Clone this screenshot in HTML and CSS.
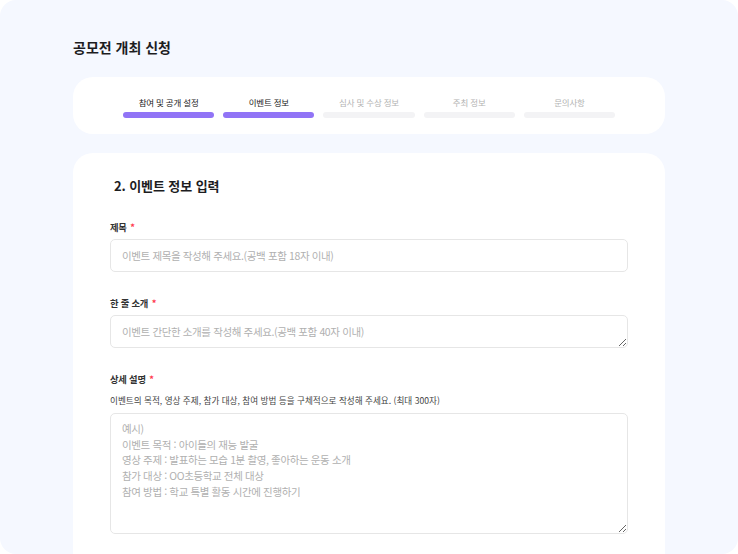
FILE: index.html
```html
<!DOCTYPE html>
<html lang="ko">
<head>
<meta charset="utf-8">
<link rel="stylesheet" href="styles.css">
</head>
<body>
<div class="page">
  <h1 class="title">공모전 개최 신청</h1>
  <div class="card stepper">
    <div class="step active"><span class="step-label">참여 및 공개 설정</span><span class="bar"></span></div>
    <div class="step active"><span class="step-label">이벤트 정보</span><span class="bar"></span></div>
    <div class="step"><span class="step-label">심사 및 수상 정보</span><span class="bar"></span></div>
    <div class="step"><span class="step-label">주최 정보</span><span class="bar"></span></div>
    <div class="step"><span class="step-label">문의사항</span><span class="bar"></span></div>
  </div>
  <div class="card form">
    <h2 class="form-title">2. 이벤트 정보 입력</h2>
    <div class="field">
      <label class="label">제목 <span class="req">*</span></label>
      <input class="input" type="text" placeholder="이벤트 제목을 작성해 주세요.(공백 포함 18자 이내)">
    </div>
    <div class="field">
      <label class="label">한 줄 소개 <span class="req">*</span></label>
      <textarea class="input short" placeholder="이벤트 간단한 소개를 작성해 주세요.(공백 포함 40자 이내)"></textarea>
    </div>
    <div class="field">
      <label class="label">상세 설명 <span class="req">*</span></label>
      <p class="help">이벤트의 목적, 영상 주제, 참가 대상, 참여 방법 등을 구체적으로 작성해 주세요. (최대 300자)</p>
      <textarea class="input long" placeholder="예시)&#10;이벤트 목적 : 아이들의 재능 발굴&#10;영상 주제 : 발표하는 모습 1분 촬영, 좋아하는 운동 소개&#10;참가 대상 : OO초등학교 전체 대상&#10;참여 방법 : 학교 특별 활동 시간에 진행하기"></textarea>
    </div>
  </div>
</div>
</body>
</html>
```

FILE: styles.css
```css
* { box-sizing: border-box; }
html, body { margin: 0; padding: 0; background: #ffffff; }
body {
  font-family: "Noto Sans CJK KR", "Noto Sans", sans-serif;
  color: #222;
}
.page {
  width: 738px;
  height: 554px;
  background: #f5f8ff;
  border-radius: 16px;
  padding: 36px 73px 0;
  overflow: hidden;
}
.title {
  margin: 0;
  font-size: 14px;
  line-height: 22px;
  font-weight: 700;
  letter-spacing: 0;
  color: #1d1d1f;
}
.card {
  background: #ffffff;
  border-radius: 20px;
}
.stepper {
  margin-top: 19px;
  height: 57px;
  padding: 18px 50px 0;
  display: grid;
  grid-template-columns: repeat(5, 1fr);
  column-gap: 9px;
}
.step {
  display: flex;
  flex-direction: column;
  align-items: center;
  gap: 3px;
}
.step-label {
  font-size: 8.5px;
  line-height: 14px;
  color: #b3b3b3;
  letter-spacing: -0.2px;
}
.step.active .step-label { color: #222; }
.bar {
  width: 100%;
  height: 6px;
  border-radius: 3px;
  background: #f3f3f5;
}
.step.active .bar { background: #9174f6; }
.form {
  margin-top: 19px;
  height: 420px;
  padding: 24px 37px 0;
  border-radius: 20px 20px 0 0;
}
.form-title {
  margin: 0 0 25px;
  padding-left: 4px;
  font-size: 13px;
  line-height: 18px;
  font-weight: 600;
  color: #1d1d1f;
  letter-spacing: -0.1px;
}
.field {
  display: flex;
  flex-direction: column;
  margin-bottom: 24px;
}
.label {
  font-size: 9.3px;
  line-height: 14px;
  font-weight: 600;
  color: #333;
  margin-bottom: 5px;
  letter-spacing: -0.2px;
}
.req { color: #ff3b4e; margin-left: 1px; }
.help {
  margin: 3px 0 7px;
  font-size: 8.6px;
  line-height: 12px;
  color: #444;
  letter-spacing: 0;
}
.input {
  width: 100%;
  height: 33px;
  border: 1px solid #e6e6e6;
  border-radius: 5px;
  padding: 0 11px;
  font-family: inherit;
  font-size: 10.5px;
  letter-spacing: -0.38px;
  color: #222;
  background: #fff;
  outline: none;
}
.input::placeholder { color: #b0b0b0; }
textarea.input {
  display: block;
  resize: vertical;
  line-height: 15.7px;
}
.short { padding-top: 8px; padding-bottom: 0; }
.long { height: 121px; padding-top: 7px; }
```
